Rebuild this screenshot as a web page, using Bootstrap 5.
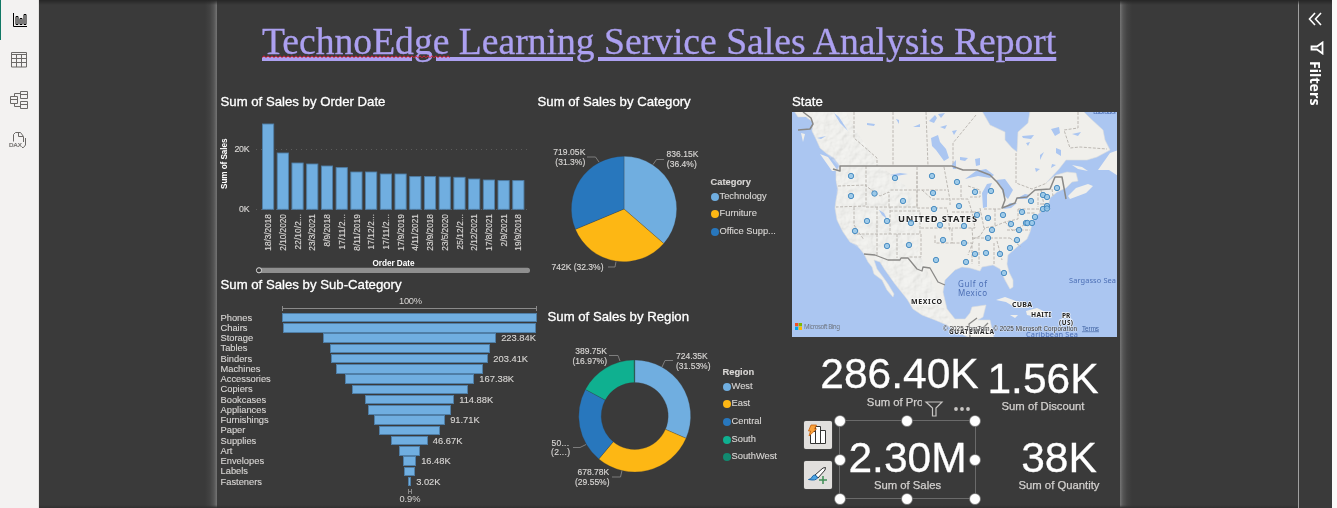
<!DOCTYPE html>
<html lang="en">
<head>
<meta charset="utf-8">
<title>Sales Analysis Report</title>
<meta name="viewport" content="width=device-width, initial-scale=1">
<link href="https://cdn.jsdelivr.net/npm/bootstrap@5.3.0/dist/css/bootstrap.min.css" rel="stylesheet">
<style>
  body{background:#3a3a3a;color:#fff;font-family:"Liberation Sans",Arial,sans-serif;height:508px;overflow:hidden}
  svg{display:block;flex:none}
  svg text{font-family:"Liberation Sans",Arial,sans-serif;fill:#d8d6d4}
  #bars text,#pie text,#donut text{stroke:#d8d6d4;stroke-width:.15px}
  .rail{width:39px;background:#f3f2f1;border-right:1px solid #e4e3e1}
  .rail-item{height:40px;width:38px}
  .rail-item.active{border-left:1px solid #117865}
  .gutter{width:178px}
  .gutter-l{background:linear-gradient(to left,#757575,#555 3px,#434343 7px,#3a3a3a 12px)}
  .gutter-r{background:linear-gradient(to right,#757575,#555 3px,#434343 7px,#3a3a3a 12px)}
  .report{width:903px}
  .report-title{height:92px;padding-top:20px}
  .report-title h1{font:37.62px/43px "Liberation Serif","Times New Roman",serif;color:#aca0f0;-webkit-text-stroke:.3px #aca0f0;text-decoration:underline;text-decoration-thickness:3.600px;text-underline-offset:3px;margin:0 0 0 45px;white-space:nowrap}
  .squiggle{left:45px;top:54.5px}
  .vtitle{font-size:13.2px;line-height:19px;height:19px;margin:0;font-weight:400;white-space:nowrap;-webkit-text-stroke:.3px #fff}
  .col-a{width:320px}.col-b{width:255px}.col-c{width:325px}
  .funnel-row{height:10.25px;font-size:9.33px;line-height:10.25px;color:#d8d6d4;-webkit-text-stroke:.12px #d8d6d4}
  .funnel-name{width:65px;padding-left:3.5px}
  .funnel-bar{height:9.6px;background:#70aee0;border:1px solid #4f7ea6}
  .funnel-val{left:100%;top:0;margin-left:6px;white-space:nowrap;line-height:9px}
  .legend-box{font-size:9.33px;color:#d8d6d4;white-space:nowrap;padding-left:.5px;-webkit-text-stroke:.12px #d8d6d4}
  .legend-box b{display:block;line-height:12px}
  .legend-item{height:17.6px}
  .dot{width:8px;height:8px;border-radius:50%;margin-right:1px;flex:none}
  .kpi{text-align:center;white-space:nowrap}
  .kpi-num{font-size:42.5px;line-height:42.5px;display:block;-webkit-text-stroke:.3px #fff}
  .kpi-cap{font-size:11.3px;line-height:12px;display:block;color:#d4d2d0;-webkit-text-stroke:.25px #d0cecc}
  .kpi-a{width:159px;padding-top:16px}.kpi-b{width:130px;padding-top:21px}
  .kpi-c{width:135px;height:77px;padding-top:16px;outline:1px solid #6a6a6a;outline-offset:-.5px}
  .kpi-d{width:100px;padding-top:16px;margin-left:34px}
  .kpi-row{height:84px}
  .visual-tools{right:0;bottom:2px;width:57px;height:22px;background:#3a3a3a}
  .handles{left:-8px;top:-8px}
  .tool-btn{width:28px;height:28px;background:#e1dfdd;border-radius:2px;padding:0;border:0;box-shadow:0 0 1px #999}
  .filters{width:34px;border-left:1px solid #a0a0a0;padding-right:1px}
  .filters-label{writing-mode:vertical-rl;font:700 14.2px/18px "Open Sans","Noto Sans",sans-serif;margin-top:6px}
  .edge{width:5px;background:#faf9f8}
  .shade{left:39px;right:5px;top:0;height:5px;background:linear-gradient(#262626,rgba(58,58,58,0))}
  .shade-b{left:39px;right:39px;bottom:0;height:3px;background:linear-gradient(rgba(58,58,58,0),#303030)}
  #map text{font-family:"Noto Sans","Open Sans",sans-serif}
  #map .place{font-weight:700;fill:#222;stroke:#fff;stroke-width:1.4px;paint-order:stroke;stroke-opacity:.8}
  #map .sea{fill:#4c6fb5}
</style>
</head>
<body class="d-flex position-relative">

<nav class="rail d-flex flex-column flex-shrink-0">
  <div class="rail-item active d-flex align-items-center justify-content-center">
    <svg width="16" height="16" fill="none" stroke="#000"><path d="M1.500 1v13.500H15M4 4.500h2v8h-2zM8 6.500h2v6h-2zM12 2.500h2v10h-2z"/></svg>
  </div>
  <div class="rail-item d-flex align-items-center justify-content-center">
    <svg width="18" height="16" fill="none" stroke="#6b6967"><path d="M1.500.5h15v14.500h-15zM1.500 2.500h15M1.500 6.500h15M1.500 10.500h15M6.500 2.500V15M11.500 2.500V15"/></svg>
  </div>
  <div class="rail-item d-flex align-items-center justify-content-center">
    <svg width="20" height="20" fill="none" stroke="#6b6967"><path d="M1.500 6.500h7v7h-7zM1.500 9.500h7M11.500 1.500h7v7h-7zM11.500 4.500h7M11.500 11.500h7v7h-7zM11.500 14.500h7M5.500 6.500v-3h6M5.500 13.500v3h6"/></svg>
  </div>
  <div class="rail-item d-flex align-items-center justify-content-center">
    <svg width="20" height="18" fill="none" stroke="#6b6967"><path d="M4.500 10.500V3.500l2-2h5l3 4V11M9.500 1.500v4h4.500M16.500 7v7l-2 2.500h-1.500"/><text x="0" y="16" textLength="13" style="font-size:6.200px;fill:#6b6967;stroke-width:.2">DAX</text></svg>
  </div>
</nav>

<div class="gutter gutter-l flex-shrink-0"></div>

<main class="report flex-shrink-0">
  <header class="report-title position-relative">
    <h1>TechnoEdge Learning Service Sales Analysis Report</h1>
    <svg class="squiggle position-absolute" width="188" height="4"><defs><pattern id="wave" width="4" height="4" patternUnits="userSpaceOnUse"><path d="M0 2.800L2 .8L4 2.800" fill="none" stroke="#e02038"/></pattern></defs><rect width="188" height="4" fill="url(#wave)"/></svg>
  </header>

  <div class="d-flex">
    <div class="col-a">
      <section>
        <h2 class="vtitle" style="padding-left:3.5px">Sum of Sales by Order Date</h2>
        <svg id="bars" width="320" height="164" viewBox="217 111 320 164"></svg>
      </section>
      <section>
        <h2 class="vtitle" style="padding-left:3.5px">Sum of Sales by Sub-Category</h2>
        <svg width="322" height="18.500" viewBox="217 294 322 18.500"><text x="399" y="304" font-size="9.300" textLength="23">100%</text><path d="M282.500 306v5M536.500 306v5M282.500 308.500H537" stroke="#8a8a8a" fill="none"/></svg>
        <div id="funnel"></div>
        <svg width="320" height="20" viewBox="217 487 320 20"><path d="M408.500 489v5M411.500 489v5M408.500 491.500h3" stroke="#8a8a8a"/><text x="399.500" y="502" font-size="9.300" textLength="21">0.9%</text></svg>
      </section>
    </div>

    <div class="col-b">
      <section>
        <h2 class="vtitle" style="padding-left:.5px">Sum of Sales by Category</h2>
        <div class="d-flex">
          <svg id="pie" width="173" height="196" viewBox="537 111 173 196"></svg>
          <div class="legend-box" style="padding-top:65px" id="catLegend"></div>
        </div>
      </section>
      <section>
        <h2 class="vtitle" style="padding-left:10.5px">Sum of Sales by Region</h2>
        <div class="d-flex">
          <svg id="donut" width="185" height="170" viewBox="537 326 185 170"></svg>
          <div class="legend-box" style="padding-top:40px" id="regLegend"></div>
        </div>
      </section>
    </div>

    <div class="col-c">
      <h2 class="vtitle" style="height:20px">State</h2>
      <svg id="map" width="325" height="225" viewBox="792 112 325 225">
        <defs>
          <filter id="relief" x="0" y="0" width="100%" height="100%"><feTurbulence type="fractalNoise" baseFrequency=".11" numOctaves="4" seed="7"/><feDiffuseLighting surfaceScale="2.200" lighting-color="#fff"><feDistantLight azimuth="225" elevation="58"/></feDiffuseLighting></filter>
          <clipPath id="mountains"><path d="M813 112H846L862 140L880 166L905 185L922 215L918 250L940 300L955 330L940 322L922 315L907 299L895 284L885 270L880 262L864 252L850 242L838 222L836 180L838 166L826 153L816 139L813 130Z"/></clipPath>
        </defs>
        <rect x="792" y="112" width="325" height="225" fill="#abc6f1"/>
        <path fill="#f0efeb" stroke="#dcdedd" stroke-width=".6" d="M794 111L798 117L806 117L813 122L812 131L816 139L820 148L826 153L834 158L840 166L836 171L836 180L838 190L836 200L835 208L837 220L843 232L850 242L857 245L864 254L868 262L872 267L874 274L882 280L887 290L893 297L894 294L888 284L883 277L877 269L874 260L880 262L885 270L895 284L907 299L913 309L922 315L935 320L947 325L955 331L970 338H994L990 320L978 320L983 317L986 305L972 307L970 313L965 319L955 319L947 309L943 292L945 280L955 270L962 267L970 268L980 271L982 267L993 265L1000 269L1005 280L1010 289L1013 287L1013 280L1009 272L1007 264L1008 255L1017 247L1027 239L1030 232L1032 224L1037 215L1042 211L1050 211L1048 207L1050 198L1057 192L1066 188L1072 182L1078 181L1076 173L1067 172L1056 175L1046 183L1059 169L1066 160L1087 160L1097 157L1110 150L1105 140L1103 130L1090 118L1083 111H1030L1028 123L1018 132L1017 152L1012 148L1005 140L1005 132L990 125L982 111Z"/>
        <g fill="#f0efeb">
          <path d="M1118 150L1110 153L1098 170L1109 170L1118 176ZM1068 196L1076 188L1088 184L1093 186L1086 193L1070 199ZM1072 165L1082 167L1088 171L1078 169ZM820 154L828 157L838 171L832 171ZM801 133l4 1l-2 8zM996 300L1005 297L1019 302L1027 307L1016 308L1006 302ZM1026 311L1037 308L1052 315L1037 317L1027 315ZM1062 315h8l-1 3h-7zM1010 315h8l-3 3z"/>
        </g>
        <g clip-path="url(#mountains)"><rect x="792" y="112" width="170" height="225" filter="url(#relief)" opacity=".24" style="mix-blend-mode:multiply"/></g>
        <g fill="#abc6f1">
          <path d="M965 179L976 171L986 169L994 175L990 178L978 176ZM983 208L982 193L987 184L992 183L987 195L987 207ZM996 180L1005 179L1013 190L1008 199L1003 194L1001 186ZM1003 209L1010 203L1017 203L1011 208ZM1016 199L1025 194L1030 195L1027 199ZM931 138L938 135L940 142L946 149L949 158L944 161L936 150L932 146ZM929 121l6-6l2 3l-3 5zM940 127l7-2l-2 4zM938 114l7-1l-4 5zM834 113l5 4l9 14l-8-8zM867 123l8 1l-1 2l-7-1zM913 127l7-3v3zM896 119l3 1v4zM975 159l5-1v7l-4 1zM960 157l8 1l-3 3l-5-1zM1022 136l12-1l-3 4l-8-1zM1051 129l8-2l1 6l-5 3zM1072 134l9-2l-3 4zM1056 148l5 2v6l-5-3zM1040 155l4-3l-4 8zM1026 143l4-1l-2 4zM952 131l5-1l-3 5zM1035 168l5 1l-4 3zM1052 164l4 1l-5 3zM890 175l10-2l8 1l-12 2zM879 210l5 3l3 6l-5-4zM817 138l9-2l-5 3zM797 118l9-1l2 5l-4 4l-7-4zM952 164l4-4v9h-3z"/>
        </g>
        <g fill="none" stroke="#b7b2ad" stroke-width=".9" stroke-dasharray="3 1.500">
          <path d="M854 112v26L877 158V166M893 112v54M926 112l2 54M976 115L953 143V165M1016 153V183L1032 189L1047 183M1078 112V128L1064 130L1070 148L1080 147L1107 149"/>
          <path d="M838 186L866 185V206L836 207M866 166V186L880 196L889 192V207H917V190H889M917 167V208M917 190H946M917 172V190M917 208H947L950 232M944 167L950 200L950 205M854 207V225L864 240M866 207H890V234H854M877 207V234M890 211H920V234H890M897 234V258M921 234V257H908M877 234V255M921 228H952V243H935V234M952 199H968L972 212L975 228H952M952 243H972V264M972 228L973 242L968 255M972 238H1010M979 243V266M994 243V264M997 241L1002 260M961 185V199M968 186L980 190V197H970M980 208L984 228L995 226L1005 222L1018 219V209M995 209V226M1018 209H1040V213M1022 209V213H1036M1005 222L1013 231L1024 225M1007 230H1030M1010 238L1021 247M1038 193V207M1052 189L1053 196M973 212H982M984 209H1002M1040 204H1049M1041 190L1044 205M985 228L980 236L973 239M952 212H974M922 190L932 199H949"/>
        </g>
        <g fill="none" stroke="#8a8987" stroke-width="1.300" stroke-linejoin="round">
          <path stroke-width="1.500" d="M803 112L811 118L813 124L810 129L798 130M833 169L840 171V166H952L963 170L977 170L990 175L997 182L1003 190L1005 200L1002 208L1015 203L1017 198L1027 197L1035 190L1050 189L1055 177H1062L1066 199"/>
          <path d="M864 254L875 255L888 260H900L901 258H908L917 269L922 271L923 267L930 268L938 282L945 285M970 337L969 324L977 318M976 330L984 327L988 323"/>
        </g>
        <text class="place" x="898" y="222" font-size="9.300" textLength="79">UNITED STATES</text>
        <g id="pins" fill="#8fc3e8" stroke="#3f86bd" stroke-width=".9"></g>
        <text class="place" x="911" y="304" font-size="7" textLength="31">MEXICO</text>
        <text class="place" x="1012" y="306.500" font-size="7" textLength="20">CUBA</text>
        <text class="place" x="1031" y="316.500" font-size="6.700" textLength="20">HAITI</text>
        <text class="place" x="1062" y="317.500" font-size="6.500">PR</text>
        <text class="place" x="1059" y="324.500" font-size="6.300" textLength="14">(US)</text>
        <text class="place" x="949" y="334" font-size="6.500" textLength="45">GUATEMALA</text>
        <text class="sea" x="958" y="287" font-size="8" textLength="29">Gulf of</text>
        <text class="sea" x="958" y="296" font-size="8" textLength="29">Mexico</text>
        <text class="sea" x="1069" y="283" font-size="7.400" textLength="47">Sargasso Sea</text>
        <text class="sea" x="1026" y="337" font-size="7.400" textLength="52">Caribbean Sea</text>
        <text class="sea" x="1093" y="114" font-size="7.200" textLength="24">Labrador</text>
        <path fill="#f25022" d="M795 323h3.300v3.300H795z"/><path fill="#7fba00" d="M798.700 323h3.300v3.300h-3.300z"/><path fill="#00a4ef" d="M795 326.700h3.300v3.300H795z"/><path fill="#ffb900" d="M798.700 326.700h3.300v3.300h-3.300z"/>
        <text x="804" y="329" font-size="6.200" textLength="36" style="fill:#6f7680">Microsoft Bing</text>
        <text x="943" y="330.500" textLength="134" style="font-family:'Liberation Sans';font-size:6.300px;fill:#333;stroke:#f4f4f4;stroke-width:1px;stroke-opacity:.5;paint-order:stroke">© 2025 TomTom, © 2025 Microsoft Corporation</text>
        <text x="1082" y="330.500" textLength="17" style="font-family:'Liberation Sans';font-size:6.300px;fill:#3c5f9e;text-decoration:underline">Terms</text>
      </svg>

      <div class="kpi-row d-flex position-relative" style="padding-left:28px">
        <div class="kpi kpi-a position-relative">
          <span class="kpi-num">286.40K</span><span class="kpi-cap">Sum of Profit</span>
          <div class="visual-tools position-absolute">
            <svg width="54" height="22" fill="none" stroke="#c8c6c4" stroke-width="1.200"><path d="M4 5H20L14 11V19H10.500V11Z"/><g fill="#c8c6c4" stroke="none"><circle cx="34" cy="12" r="1.900"/><circle cx="40" cy="12" r="1.900"/><circle cx="46" cy="12" r="1.900"/></g></svg>
          </div>
        </div>
        <div class="kpi kpi-b" style="margin-left:-1px"><span class="kpi-num">1.56K</span><span class="kpi-cap" style="margin-top:-1px">Sum of Discount</span></div>
      </div>
      <div class="d-flex" style="padding-left:12px">
        <div class="d-flex flex-column gap-2 me-2">
          <button class="tool-btn d-flex align-items-center justify-content-center mb-1" aria-label="Build visual">
            <svg width="28" height="28" viewBox="0 0 28 28"><path d="M6.500 10.500h5v12h-5zM11.500 5.500h5v17h-5zM16.500 9.500h5v13h-5z" fill="#fff" stroke="#333"/><path d="M7 4h5.500l-2 4h2l-7.500 7l1.500-5H4.500z" fill="#f9a13a" stroke="#c8600a" stroke-width=".8"/></svg>
          </button>
          <button class="tool-btn d-flex align-items-center justify-content-center" aria-label="Format visual">
            <svg width="28" height="28" viewBox="0 0 28 28"><path d="M11 14L19 7l2.500-.5l-.5 2.500L14 17z" fill="#fff" stroke="#333"/><path d="M11 14q2 .5 2.500 3Q12 20 4.500 18.500Q8 18 8 16Q9 14 11 14Z" fill="#4ba3e3" stroke="#1a66a8"/><path d="M19 15v8M15 19h8" stroke="#3f8f55" stroke-width="1.500"/></svg>
          </button>
        </div>
        <div class="kpi kpi-c position-relative">
          <span class="kpi-num">2.30M</span><span class="kpi-cap" style="margin-top:-.5px">Sum of Sales</span>
          <svg class="handles position-absolute" width="151" height="94" fill="#fff" stroke="#666" stroke-width=".7"><circle cx="8" cy="8" r="5.500"/><circle cx="75" cy="8" r="5.500"/><circle cx="143" cy="8" r="5.500"/><circle cx="8" cy="47" r="5.500"/><circle cx="143" cy="47" r="5.500"/><circle cx="8" cy="86" r="5.500"/><circle cx="75" cy="86" r="5.500"/><circle cx="143" cy="86" r="5.500"/></svg>
        </div>
        <div class="kpi kpi-d"><span class="kpi-num">38K</span><span class="kpi-cap" style="margin-top:-.5px">Sum of Quantity</span></div>
      </div>
    </div>
  </div>
</main>

<div class="gutter gutter-r flex-shrink-0"></div>

<aside class="filters flex-shrink-0 d-flex flex-column align-items-center">
  <svg width="14" height="14" style="margin-top:12px" fill="none" stroke="#fff" stroke-width="1.600"><path d="M7 1L1.500 7L7 13M13 1L7.500 7L13 13"/></svg>
  <svg width="14" height="14" style="margin-top:15px;margin-left:3px" fill="none" stroke="#fff" stroke-width="1.800"><path d="M12.500 1.500V12.500L7 8.500H1.500V5.500H7Z"/></svg>
  <div class="filters-label">Filters</div>
</aside>
<div class="edge flex-shrink-0"></div>
<div class="shade position-absolute"></div>
<div class="shade-b position-absolute"></div>

<script>
  const el = id => document.getElementById(id);
  const txt = (x, y, s, size, len, extra = '') => `<text x="${x}" y="${y}" font-size="${size}" textLength="${len}" ${extra}>${s}</text>`;

  // Column chart: label, bar height
  const days = [['18/3/2018',85.3],['2/10/2020',56.3],['22/10/2...',46.3],['23/3/2021',45.3],['8/9/2018',43.3],['17/11/2...',41.7],['8/11/2019',37.3],['17/12/2...',37.3],['17/11/2...',35.3],['17/9/2019',35.3],['4/11/2021',32.7],['23/9/2018',32.7],['23/5/2020',32.3],['25/12/2...',32],['2/12/2021',30.3],['17/8/2021',29.3],['2/9/2021',28.7],['19/9/2018',28.7]];
  let s = '<path d="M256 149.500H530M256 209.500H530" stroke="#5c5c5c" stroke-dasharray="1 4"/>';
  days.forEach(([d, h], i) => {
    const x = 262.5 + i * 14.72, len = d.length === 8 ? 32.5 : d.includes('...') ? 35.5 : 36.7;
    s += `<rect x="${x}" y="${209.3 - h}" width="11.2" height="${h}" fill="#70aee0" stroke="#4f7ea6" stroke-width=".9"/>`;
    s += txt(-214 - len, x + 8.7, d, 8.3, len, 'transform="rotate(-90)"');
  });
  s += txt(234.5, 152.3, '20K', 8.8, 15) + txt(239, 212.3, '0K', 8.8, 10.5);
  s += txt(-189, 227, 'Sum of Sales', 8.2, 50.5, 'transform="rotate(-90)" font-weight="700" style="fill:#fff;stroke:none"');
  s += txt(372.5, 266, 'Order Date', 8.2, 42, 'font-weight="700" style="fill:#fff;stroke:none"');
  s += '<rect x="257" y="267.8" width="273" height="5.200" rx="2.500" fill="#8f8f8f"/><circle cx="259" cy="270.300" r="2.600" fill="#3a3a3a" stroke="#d8d8d8"/>';
  el('bars').innerHTML = s;

  // Funnel
  const funnel = [['Phones',766],['Chairs',761],['Storage',520,'223.84K'],['Tables',480],['Binders',473,'203.41K'],['Machines',440],['Accessories',389,'167.38K'],['Copiers',348],['Bookcases',268,'114.88K'],['Appliances',251],['Furnishings',214,'91.71K'],['Paper',182],['Supplies',110,'46.67K'],['Art',65],['Envelopes',40,'16.48K'],['Labels',31],['Fasteners',10,'3.02K']];
  el('funnel').innerHTML = funnel.map(([n, w, v]) => `<div class="funnel-row d-flex align-items-center"><div class="funnel-name">${n}</div><div class="flex-grow-1 d-flex justify-content-center"><div class="funnel-bar position-relative flex-shrink-0" style="width:${(w / 3).toFixed(1)}px">${v ? `<span class="funnel-val position-absolute">${v}</span>` : ''}</div></div></div>`).join('');

  // Pie and ring slices
  const ring = (cx, cy, R, r, parts) => {
    let a = 0;
    const p = (rad, t) => `${(cx + rad * Math.sin(t)).toFixed(2)} ${(cy - rad * Math.cos(t)).toFixed(2)}`;
    return parts.map(([v, c]) => {
      const b = a + v / 100 * 2 * Math.PI, big = v > 50 ? 1 : 0;
      const d = `M${p(R, a)}A${R} ${R} 0 ${big} 1 ${p(R, b)}L${p(r, b)}A${r} ${r} 0 ${big} 0 ${p(r, a)}Z`;
      a = b;
      return `<path d="${d}" fill="${c}" stroke="#3a3a3a" stroke-opacity=".45" stroke-width=".6"/>`;
    }).join('');
  };
  const lead = d => `<path d="${d}" fill="none" stroke="#858585" stroke-width=".9"/>`;
  el('pie').innerHTML = ring(624, 209, 52.7, 0.01, [[36.4,'#70aee0'],[32.3,'#fdb714'],[31.3,'#2877bd']])
    + lead('M653 164.500L656.500 159.500H664M587 157H595.500L599 162M608 267H615L616 261.500')
    + txt(553.3, 155.2, '719.05K', 8.5, 32) + txt(555.3, 165.2, '(31.3%)', 8.5, 30)
    + txt(666.5, 157.2, '836.15K', 8.5, 32) + txt(666.8, 167.2, '(36.4%)', 8.5, 30)
    + txt(551.5, 270, '742K (32.3%)', 8.5, 52);
  el('donut').innerHTML = ring(634.7, 416, 56, 33.5, [[31.53,'#70aee0'],[29.55,'#fdb714'],[21.8,'#2877bd'],[16.97,'#0fb090'],[.15,'#128a70']])
    + lead('M662 367L665 360.500H673M609 355.500H618L620 361M573 447.500H580L586 444.500M612 477H620.500L622 470.500')
    + txt(575.3, 354.3, '389.75K', 8.5, 31.7) + txt(572.5, 363.5, '(16.97%)', 8.5, 34.5)
    + txt(676, 359.2, '724.35K', 8.5, 31.7) + txt(676, 369.2, '(31.53%)', 8.5, 34.5)
    + txt(551.5, 446.3, '50...', 8.5, 17.5) + txt(551, 455.3, '(2...)', 8.5, 19)
    + txt(577.5, 475.3, '678.78K', 8.5, 31.7) + txt(575, 485.3, '(29.55%)', 8.5, 34.5);

  const legend = (id, title, items) => el(id).innerHTML = `<b>${title}</b>` + items.map(([n, c]) => `<div class="legend-item d-flex align-items-center"><span class="dot" style="background:${c}"></span>${n}</div>`).join('');
  legend('catLegend', 'Category', [['Technology','#70aee0'],['Furniture','#fdb714'],['Office Supp...','#2877bd']]);
  legend('regLegend', 'Region', [['West','#70aee0'],['East','#fdb714'],['Central','#2877bd'],['South','#0fb090'],['SouthWest','#128a70']]);

  const pins = [[851,176],[895,178],[932,176],[851,196],[874.5,193.5],[903,201],[933,193],[934,209],[957,182],[975,192],[991,191],[959,206],[977,215],[1003,215],[1022,212],[1031,201],[1043,195],[1047,197],[1057,188],[1043,209],[1047,206],[1047,208.5],[1035,217],[867,221],[887,221],[855,231],[911,223],[940,225],[943,240],[887,246],[909,245],[936,260],[964,226],[988,218],[1011,224],[992,230],[988,238],[1019,230],[1026,223],[1027.5,223],[1032,223],[1017,240],[1010,248],[964,243],[975,254],[986,253],[1000,254],[966,262],[1004,273]];
  el('pins').innerHTML = pins.map(([x, y]) => `<circle cx="${x}" cy="${y}" r="2.700" fill-opacity=".85"/>`).join('');
</script>
<script src="https://cdn.jsdelivr.net/npm/bootstrap@5.3.0/dist/js/bootstrap.bundle.min.js"></script>
</body>
</html>
